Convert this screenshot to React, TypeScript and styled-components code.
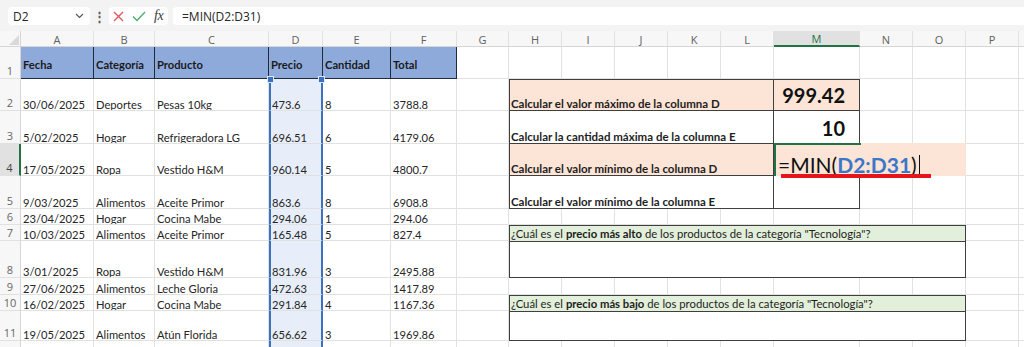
import React from "react";
import styled, { createGlobalStyle, css } from "styled-components";

const UI_FONT = `"Open Sans", "Noto Sans", sans-serif`;
const CELL_FONT = `"Lato", "Liberation Sans", sans-serif`;
const GRID = "#e1e1e1";
const DARK = "#3f3f3f";
const GREEN = "#217346";
const SEL = "#3c70c3";
const PEACH = "#fce4d6";

const GlobalStyle = createGlobalStyle`
  html, body { margin: 0; padding: 0; background: #fff; }
  body { width: 1024px; height: 347px; overflow: hidden; font-family: ${CELL_FONT}; }
`;

const Window = styled.div`
  display: flex;
  flex-direction: column;
  width: 1024px;
  height: 347px;
  overflow: hidden;
  background: #fff;
`;

/* ---------- formula bar ---------- */
const FormulaBar = styled.div`
  display: flex;
  align-items: stretch;
  height: 33px;
  box-sizing: border-box;
  padding: 7px 0 6px 8px;
  background: #f3f3f3;
  font-family: ${UI_FONT};
`;

const NameBox = styled.div`
  width: 82px;
  box-sizing: border-box;
  display: flex;
  align-items: center;
  justify-content: space-between;
  padding: 0 6px 0 5px;
  background: #fff;
  border-radius: 4px;
  font-size: 12px;
  color: #262626;
`;

const Dots = styled.div`
  width: 19px;
  display: flex;
  align-items: center;
  justify-content: center;
  color: #5c5c5c;
  font-size: 13px;
  font-weight: 700;
`;

const ButtonsBox = styled.div`
  width: 59px;
  box-sizing: border-box;
  display: flex;
  align-items: center;
  gap: 8px;
  padding-left: 4px;
  background: #fff;
  border-radius: 4px;
`;

const Fx = styled.span`
  font-family: "Liberation Serif", "DejaVu Serif", serif;
  font-style: italic;
  font-size: 14px;
  color: #3a3a3a;
  letter-spacing: -0.5px;
`;

const FormulaInput = styled.div`
  flex: 1;
  margin-left: 5px;
  display: flex;
  align-items: center;
  padding-left: 9px;
  background: #fff;
  border-radius: 4px 0 0 4px;
  font-size: 12px;
  color: #262626;
`;

/* ---------- sheet ---------- */
const COLS = ["A", "B", "C", "D", "E", "F", "G", "H", "I", "J", "K", "L", "M", "N", "O", "P", ""];
const WIDTHS = [73, 61, 114, 54, 68, 66, 52, 53, 53, 53, 53, 53, 86, 53, 53, 53, 60];
const HEIGHTS = [32, 32, 33, 32, 33, 16, 16, 37, 17, 16, 30, 30];

const Sheet = styled.div`
  display: grid;
  grid-template-columns: 21px ${WIDTHS.map((w) => `${w}px`).join(" ")};
  grid-template-rows: 16px ${HEIGHTS.map((h) => `${h}px`).join(" ")};
  font-family: ${CELL_FONT};
`;

const Corner = styled.div`
  position: relative;
  background: #f7f7f7;
  border-right: 1px solid #d6d6d6;
  border-bottom: 1px solid #d6d6d6;
  box-sizing: border-box;
  display: flex;
  align-items: flex-end;
  justify-content: flex-end;
  padding: 0 1px 1px 0;
`;

const CornerTriangle = styled.div`
  width: 0;
  height: 0;
  border-left: 10px solid transparent;
  border-bottom: 10px solid #d9d9d9;
`;

const ColHead = styled.div<{ $active?: boolean }>`
  box-sizing: border-box;
  display: flex;
  align-items: center;
  justify-content: center;
  padding-top: 2px;
  background: #f7f7f7;
  border-right: 1px solid ${GRID};
  border-bottom: 1px solid #d6d6d6;
  font-family: ${UI_FONT};
  font-size: 11px;
  line-height: 12px;
  color: #616161;
  ${(p) =>
    p.$active &&
    css`
      background: #e1e1e1;
      color: ${GREEN};
      border-bottom: 2px solid ${GREEN};
    `}
`;

const RowHead = styled.div<{ $active?: boolean }>`
  box-sizing: border-box;
  display: flex;
  align-items: flex-end;
  justify-content: center;
  background: #f7f7f7;
  border-right: 1px solid #d6d6d6;
  border-bottom: 1px solid ${GRID};
  font-family: ${UI_FONT};
  font-size: 11px;
  line-height: 14px;
  color: #666;
  ${(p) =>
    p.$active &&
    css`
      background: #e1e1e1;
      border-right: 2px solid ${GREEN};
      color: #444;
    `}
`;

const Cell = styled.div<{ $sel?: boolean }>`
  position: relative;
  box-sizing: border-box;
  min-width: 0;
  display: flex;
  align-items: flex-end;
  padding: 0 2px;
  background: #fff;
  border-right: 1px solid ${GRID};
  border-bottom: 1px solid ${GRID};
  font-size: 11.2px;
  line-height: 11px;
  color: #262626;
  white-space: nowrap;
  overflow: hidden;
  ${(p) =>
    p.$sel &&
    css`
      overflow: visible;
      background: #e7eef9;
      border-left: 2px solid ${SEL};
      border-right: 2px solid ${SEL};
      padding-left: 1px;
    `}
`;

const HeaderCell = styled(Cell)`
  align-items: center;
  padding-top: 3px;
  background: #8eaadb;
  border-right: 1px solid #1f2a3a;
  border-bottom: 1px solid #1f2a3a;
  font-weight: 700;
  color: #1a1a1a;
`;

const Handle = styled.div<{ $side: "left" | "right" }>`
  position: absolute;
  top: -3px;
  ${(p) => (p.$side === "left" ? "left: -4px;" : "right: -4px;")}
  width: 5px;
  height: 5px;
  background: ${SEL};
  border: 1px solid #dfe8f6;
  z-index: 3;
`;

/* ---------- calc box ---------- */
const CalcBox = styled.div`
  grid-column: 9 / span 6;
  grid-row: 3 / span 4;
  display: grid;
  grid-template-columns: 1fr 86px;
  grid-template-rows: 31px 33px 32px 1fr;
  box-sizing: border-box;
  border-top: 1px solid ${DARK};
  border-left: 1px solid ${DARK};
  position: relative;
`;

const CalcLabel = styled.div<{ $fill?: boolean }>`
  display: flex;
  align-items: flex-end;
  padding: 0 0 0 1px;
  background: ${(p) => (p.$fill ? PEACH : "#fff")};
  border-right: 1px solid ${DARK};
  border-bottom: 1px solid ${DARK};
  font-size: 11.5px;
  line-height: 12px;
  font-weight: 700;
  color: #1e1e1e;
  white-space: nowrap;
`;

const CalcValue = styled.div<{ $fill?: boolean }>`
  position: relative;
  display: flex;
  align-items: flex-end;
  justify-content: flex-end;
  padding: 0 14px 5px 0;
  background: ${(p) => (p.$fill ? PEACH : "#fff")};
  border-right: 1px solid ${DARK};
  border-bottom: 1px solid ${DARK};
  font-size: 20px;
  line-height: 20px;
  font-weight: 700;
  color: #111;
`;

const Editor = styled.div`
  position: absolute;
  left: 0;
  top: -1px;
  width: 192px;
  height: 33px;
  box-sizing: border-box;
  display: flex;
  align-items: flex-end;
  padding: 0 0 1px 2px;
  background: ${PEACH};
  border-left: 2px solid ${GREEN};
  z-index: 4;
  font-size: 21px;
  line-height: 21px;
  font-weight: 400;
  color: #111;
  white-space: nowrap;
  &::before {
    content: "";
    position: absolute;
    left: -2px;
    top: 0;
    width: 87px;
    height: 2px;
    background: ${GREEN};
  }
`;

const Ref = styled.span`
  color: #3a77c9;
  font-weight: 700;
`;

const Caret = styled.span`
  display: inline-block;
  width: 1px;
  height: 20px;
  margin-left: 2px;
  background: #111;
  vertical-align: -3px;
`;

const RedMark = styled.div`
  position: absolute;
  left: 5px;
  top: 31px;
  width: 150px;
  height: 4px;
  background: #e5161b;
`;

/* ---------- question boxes ---------- */
const QBox = styled.div<{ $row: number }>`
  grid-column: 9 / span 8;
  grid-row: ${(p) => p.$row} / span 2;
  display: grid;
  grid-template-rows: 16px 1fr;
  box-sizing: border-box;
  border: 1px solid ${DARK};
  background: #fff;
`;

const QHead = styled.div`
  display: flex;
  align-items: flex-end;
  padding: 0 0 1px 1px;
  background: #e2efda;
  border-bottom: 1px solid ${DARK};
  font-size: 11.3px;
  line-height: 13px;
  color: #1e1e1e;
  white-space: nowrap;
`;

const QAnswer = styled.div`
  background: #fff;
`;

/* ---------- data ---------- */
const HEADERS = ["Fecha", "Categoría", "Producto", "Precio", "Cantidad", "Total"];
const DATA: string[][] = [
  ["30/06/2025", "Deportes", "Pesas 10kg", "473.6", "8", "3788.8"],
  ["5/02/2025", "Hogar", "Refrigeradora LG", "696.51", "6", "4179.06"],
  ["17/05/2025", "Ropa", "Vestido H&M", "960.14", "5", "4800.7"],
  ["9/03/2025", "Alimentos", "Aceite Primor", "863.6", "8", "6908.8"],
  ["23/04/2025", "Hogar", "Cocina Mabe", "294.06", "1", "294.06"],
  ["10/03/2025", "Alimentos", "Aceite Primor", "165.48", "5", "827.4"],
  ["3/01/2025", "Ropa", "Vestido H&M", "831.96", "3", "2495.88"],
  ["27/06/2025", "Alimentos", "Leche Gloria", "472.63", "3", "1417.89"],
  ["16/02/2025", "Hogar", "Cocina Mabe", "291.84", "4", "1167.36"],
  ["19/05/2025", "Alimentos", "Atún Florida", "656.62", "3", "1969.86"],
  ["", "", "", "", "", ""],
];

const CALC = [
  { label: "Calcular el valor máximo de la columna D", value: "999.42", fill: true },
  { label: "Calcular la cantidad máxima de la columna E", value: "10", fill: false },
  { label: "Calcular el valor mínimo de la columna D", value: "", fill: true, editing: true },
  { label: "Calcular el valor mínimo de la columna E", value: "", fill: false },
];

const covered = (row: number, col: number) => {
  if (row >= 2 && row <= 5 && col >= 7 && col <= 12) return true;
  if ([7, 8, 10, 11].includes(row) && col >= 7 && col <= 14) return true;
  return false;
};

const CloseIcon = () => (
  <svg width="11" height="11" viewBox="0 0 11 11">
    <path d="M1 1 L10 10 M10 1 L1 10" stroke="#e05a5a" strokeWidth="1.4" fill="none" />
  </svg>
);

const CheckIcon = () => (
  <svg width="14" height="11" viewBox="0 0 14 11">
    <path d="M1 5.5 L5 9.5 L13 1" stroke="#4fae6e" strokeWidth="1.4" fill="none" />
  </svg>
);

const Chevron = () => (
  <svg width="9" height="6" viewBox="0 0 9 6">
    <path d="M1 1 L4.5 4.5 L8 1" stroke="#555" strokeWidth="1.1" fill="none" />
  </svg>
);

export default function App() {
  const rows: React.ReactNode[] = [];
  for (let r = 1; r <= 12; r++) {
    /* row 12 lies below the window's lower edge, so its number is not drawn */
    rows.push(
      <RowHead key={`rh${r}`} $active={r === 4}>
        {r < 12 ? r : ""}
      </RowHead>
    );
    for (let c = 0; c < COLS.length; c++) {
      if (covered(r, c)) continue;
      if (r === 1 && c < 6) {
        rows.push(<HeaderCell key={`c${r}-${c}`}>{HEADERS[c]}</HeaderCell>);
        continue;
      }
      const text = r >= 2 && c < 6 ? DATA[r - 2][c] : "";
      const sel = c === 3 && r >= 2;
      rows.push(
        <Cell key={`c${r}-${c}`} $sel={sel}>
          {text}
          {sel && r === 2 && (
            <>
              <Handle $side="left" />
              <Handle $side="right" />
            </>
          )}
        </Cell>
      );
    }
  }

  return (
    <Window>
      <GlobalStyle />
      <FormulaBar>
        <NameBox>
          <span>D2</span>
          <Chevron />
        </NameBox>
        <Dots>⋮</Dots>
        <ButtonsBox>
          <CloseIcon />
          <CheckIcon />
          <Fx>fx</Fx>
        </ButtonsBox>
        <FormulaInput>=MIN(D2:D31)</FormulaInput>
      </FormulaBar>
      <Sheet>
        <Corner>
          <CornerTriangle />
        </Corner>
        {COLS.map((c, i) => (
          <ColHead key={`h${i}`} $active={c === "M"}>
            {c}
          </ColHead>
        ))}
        {rows}
        <CalcBox>
          {CALC.map((row, i) => (
            <React.Fragment key={i}>
              <CalcLabel $fill={row.fill}>{row.label}</CalcLabel>
              <CalcValue $fill={row.fill}>
                {row.value}
                {row.editing && (
                  <Editor>
                    =MIN(<Ref>D2:D31</Ref>)
                    <Caret />
                    <RedMark />
                  </Editor>
                )}
              </CalcValue>
            </React.Fragment>
          ))}
        </CalcBox>
        <QBox $row={8}>
          <QHead>
            ¿Cuál es el&nbsp;<b>precio más alto</b>&nbsp;de los productos de la categoría "Tecnología"?
          </QHead>
          <QAnswer />
        </QBox>
        <QBox $row={11}>
          <QHead>
            ¿Cuál es el&nbsp;<b>precio más bajo</b>&nbsp;de los productos de la categoría "Tecnología"?
          </QHead>
          <QAnswer />
        </QBox>
      </Sheet>
    </Window>
  );
}
